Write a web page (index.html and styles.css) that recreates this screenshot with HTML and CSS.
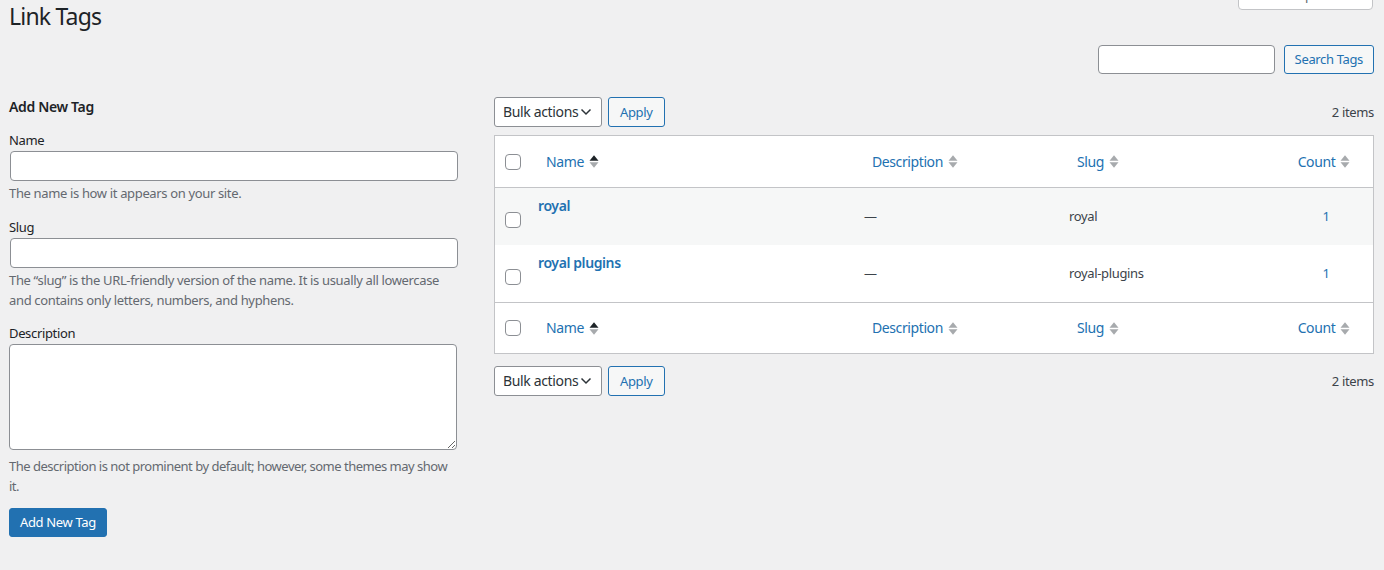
FILE: index.html
```html
<!DOCTYPE html>
<html lang="en">
<head>
<meta charset="utf-8">
<title>Link Tags</title>
<link rel="stylesheet" href="styles.css">
</head>
<body>
<div class="wrap">
  <div class="screen-options">Screen Options</div>
  <h1 class="page-title">Link Tags</h1>
  <form class="search-box">
    <input class="search-input" type="search">
    <button class="btn btn-secondary" type="button">Search Tags</button>
  </form>
  <div class="columns">
    <div class="col-left">
      <h2 class="form-title">Add New Tag</h2>
      <div class="field">
        <label class="field-label">Name</label>
        <input class="text-input" type="text">
        <p class="help">The name is how it appears on your site.</p>
      </div>
      <div class="field">
        <label class="field-label">Slug</label>
        <input class="text-input" type="text">
        <p class="help">The “slug” is the URL-friendly version of the name. It is usually all lowercase and contains only letters, numbers, and hyphens.</p>
      </div>
      <div class="field field-desc">
        <label class="field-label">Description</label>
        <textarea class="text-area"></textarea>
        <p class="help help-desc">The description is not prominent by default; however, some themes may show it.</p>
      </div>
      <button class="btn btn-primary" type="button">Add New Tag</button>
    </div>
    <div class="col-right">
      <div class="tablenav">
        <div class="actions">
          <div class="select">Bulk actions
            <svg class="chev" width="12" height="8" viewBox="0 0 12 8"><path d="M1.5 1.5 L6 6 L10.5 1.5" fill="none" stroke="#2c3338" stroke-width="1.5"/></svg>
          </div>
          <button class="btn btn-secondary" type="button">Apply</button>
        </div>
        <div class="count-items">2 items</div>
      </div>
      <div class="table">
        <div class="row head">
          <div class="c-check"><span class="checkbox"></span></div>
          <div class="c-name"><a class="sort">Name <svg class="ind" width="10" height="15" viewBox="0 0 10 15"><path d="M0.5 6.8 L5 1.3 L9.5 6.8 Z" fill="#1d2327"/><path d="M0.5 8.2 L5 13.7 L9.5 8.2 Z" fill="#a7aaad"/></svg></a></div>
          <div class="c-desc"><a class="sort">Description <svg class="ind" width="10" height="15" viewBox="0 0 10 15"><path d="M0.5 6.8 L5 1.3 L9.5 6.8 Z" fill="#a7aaad"/><path d="M0.5 8.2 L5 13.7 L9.5 8.2 Z" fill="#a7aaad"/></svg></a></div>
          <div class="c-slug"><a class="sort">Slug <svg class="ind" width="10" height="15" viewBox="0 0 10 15"><path d="M0.5 6.8 L5 1.3 L9.5 6.8 Z" fill="#a7aaad"/><path d="M0.5 8.2 L5 13.7 L9.5 8.2 Z" fill="#a7aaad"/></svg></a></div>
          <div class="c-count"><a class="sort">Count <svg class="ind" width="10" height="15" viewBox="0 0 10 15"><path d="M0.5 6.8 L5 1.3 L9.5 6.8 Z" fill="#a7aaad"/><path d="M0.5 8.2 L5 13.7 L9.5 8.2 Z" fill="#a7aaad"/></svg></a></div>
        </div>
        <div class="row body alt">
          <div class="c-check"><span class="checkbox"></span></div>
          <div class="c-name"><a class="row-title">royal</a></div>
          <div class="c-desc"><span class="dash">—</span></div>
          <div class="c-slug"><span class="cell">royal</span></div>
          <div class="c-count"><a class="num">1</a></div>
        </div>
        <div class="row body">
          <div class="c-check"><span class="checkbox"></span></div>
          <div class="c-name"><a class="row-title">royal plugins</a></div>
          <div class="c-desc"><span class="dash">—</span></div>
          <div class="c-slug"><span class="cell">royal-plugins</span></div>
          <div class="c-count"><a class="num">1</a></div>
        </div>
        <div class="row head foot">
          <div class="c-check"><span class="checkbox"></span></div>
          <div class="c-name"><a class="sort">Name <svg class="ind" width="10" height="15" viewBox="0 0 10 15"><path d="M0.5 6.8 L5 1.3 L9.5 6.8 Z" fill="#1d2327"/><path d="M0.5 8.2 L5 13.7 L9.5 8.2 Z" fill="#a7aaad"/></svg></a></div>
          <div class="c-desc"><a class="sort">Description <svg class="ind" width="10" height="15" viewBox="0 0 10 15"><path d="M0.5 6.8 L5 1.3 L9.5 6.8 Z" fill="#a7aaad"/><path d="M0.5 8.2 L5 13.7 L9.5 8.2 Z" fill="#a7aaad"/></svg></a></div>
          <div class="c-slug"><a class="sort">Slug <svg class="ind" width="10" height="15" viewBox="0 0 10 15"><path d="M0.5 6.8 L5 1.3 L9.5 6.8 Z" fill="#a7aaad"/><path d="M0.5 8.2 L5 13.7 L9.5 8.2 Z" fill="#a7aaad"/></svg></a></div>
          <div class="c-count"><a class="sort">Count <svg class="ind" width="10" height="15" viewBox="0 0 10 15"><path d="M0.5 6.8 L5 1.3 L9.5 6.8 Z" fill="#a7aaad"/><path d="M0.5 8.2 L5 13.7 L9.5 8.2 Z" fill="#a7aaad"/></svg></a></div>
        </div>
      </div>
      <div class="tablenav bottom">
        <div class="actions">
          <div class="select">Bulk actions
            <svg class="chev" width="12" height="8" viewBox="0 0 12 8"><path d="M1.5 1.5 L6 6 L10.5 1.5" fill="none" stroke="#2c3338" stroke-width="1.5"/></svg>
          </div>
          <button class="btn btn-secondary" type="button">Apply</button>
        </div>
        <div class="count-items">2 items</div>
      </div>
    </div>
  </div>
</div>
</body>
</html>
```

FILE: styles.css
```css
* { box-sizing: border-box; }
html, body { margin: 0; padding: 0; }
body {
  background: #f0f0f1;
  color: #3c434a;
  font-family: "Noto Sans", "Open Sans", sans-serif;
  font-size: 13px;
  letter-spacing: -0.35px;
  line-height: 1.4;
  overflow: hidden;
}
.wrap {
  position: relative;
  padding: 0 10px 0 9px;
}
.screen-options {
  position: absolute;
  top: -22px;
  right: 11px;
  width: 135px;
  height: 32px;
  background: #fff;
  border: 1px solid #c3c4c7;
  border-radius: 0 0 4px 4px;
  color: #646970;
  font-size: 13px;
  padding: 6px 0 0 14px;
  line-height: 20px;
  white-space: nowrap;
}
.page-title {
  margin: 0;
  padding-top: 2px;
  font-size: 23px;
  letter-spacing: -0.8px;
  font-weight: 400;
  line-height: 29px;
  color: #1d2327;
}
.search-box {
  display: flex;
  justify-content: flex-end;
  gap: 9px;
  margin: 14px 0 0;
}
.search-input {
  width: 177px;
  height: 29px;
  border: 1px solid #8c8f94;
  border-radius: 4px;
  background: #fff;
  margin: 0;
}
.btn {
  font-family: inherit;
  font-size: 13px;
  letter-spacing: -0.35px;
  line-height: 1;
  border-radius: 3px;
  margin: 0;
  cursor: pointer;
  white-space: nowrap;
}
.btn-secondary {
  height: 29px;
  padding: 0 10px;
  background: #f6f7f7;
  color: #2271b1;
  border: 1px solid #2271b1;
}
.btn-primary {
  height: 29px;
  padding: 0 10px;
  background: #2271b1;
  color: #fff;
  border: 1px solid #2271b1;
}
.columns {
  display: flex;
  gap: 36px;
  margin-top: 23px;
}
.col-left {
  width: 449px;
  flex: none;
}
.col-right {
  flex: 1;
}
.form-title {
  margin: 0;
  padding-top: 0;
  font-size: 14px;
  letter-spacing: -0.35px;
  font-weight: 600;
  line-height: 20px;
  color: #1d2327;
}
.field {
  margin-top: 13px;
}
.field + .field { margin-top: 14px; }
.field.field-desc { margin-top: 13px; }
.field-label {
  display: block;
  font-size: 13px;
  line-height: 20px;
  color: #1d2327;
  margin-bottom: 1px;
}
.text-input {
  display: block;
  width: 448px;
  height: 30px;
  margin-left: 1px;
  border: 1px solid #8c8f94;
  border-radius: 4px;
  background: #fff;
}
.text-area {
  display: block;
  width: 448px;
  height: 106px;
  border: 1px solid #8c8f94;
  border-radius: 4px;
  background: #fff;
  resize: vertical;
  margin: 0;
}
.help {
  margin: 2px 0 0;
  font-size: 13px;
  line-height: 20px;
  color: #646970;
}
.help.help-desc {
  margin-top: 6px;
  letter-spacing: -0.5px;
}
.btn-primary { margin-top: 12px; }

.tablenav {
  display: flex;
  justify-content: space-between;
  align-items: center;
  height: 30px;
}
.tablenav.bottom { margin-top: 12px; }
.actions {
  display: flex;
  gap: 6px;
  height: 30px;
}
.actions .btn-secondary { height: 30px; padding: 0 11px; }
.select {
  display: flex;
  align-items: center;
  justify-content: space-between;
  height: 30px;
  padding: 0 9px 0 8px;
  background: #fff;
  border: 1px solid #8c8f94;
  border-radius: 3px;
  color: #2c3338;
  font-size: 14px;
  width: 108px;
  white-space: nowrap;
}
.count-items {
  font-size: 13px;
  color: #3c434a;
}
.table {
  margin-top: 8px;
  background: #fff;
  border: 1px solid #c3c4c7;
}
.row {
  display: grid;
  grid-template-columns: 33px 326px 205px 228px 1fr;
  align-items: center;
}
.row.head { height: 52px; }
.row.head:first-child { border-bottom: 1px solid #c3c4c7; }
.row.foot { border-top: 1px solid #c3c4c7; height: 51px; }
.row.body { height: 57px; align-items: start; }
.row.alt { background: #f6f7f7; }
.c-check { padding-left: 10px; }
.row.body .c-check { padding-top: 24px; }
.checkbox {
  display: block;
  width: 16px;
  height: 16px;
  border: 1px solid #8c8f94;
  border-radius: 4px;
  background: #fff;
}
.sort {
  display: inline-flex;
  align-items: center;
  gap: 5px;
  color: #2271b1;
  font-size: 14px;
  letter-spacing: -0.4px;
}
.c-name .sort { padding-left: 18px; }
.c-desc .sort { padding-left: 18px; }
.c-slug .sort { padding-left: 18px; }
.c-count { text-align: center; }
.head .c-count { padding-right: 12px; }
.row-title {
  display: block;
  padding: 8px 0 0 10px;
  color: #2271b1;
  font-weight: 600;
  font-size: 14px;
  letter-spacing: -0.4px;
  line-height: 20px;
}
.dash, .cell {
  display: block;
  padding: 18px 0 0 10px;
  font-size: 13px;
  line-height: 20px;
}
.num {
  display: block;
  padding-top: 18px;
  line-height: 20px;
  color: #2271b1;
  padding-right: 8px;
}
```
